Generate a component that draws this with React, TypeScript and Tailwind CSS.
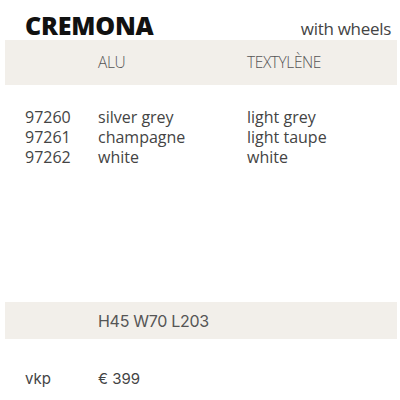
export default function App() {
  const rows = [
    ["97260", "silver grey", "light grey"],
    ["97261", "champagne", "light taupe"],
    ["97262", "white", "white"],
  ];
  return (
    <div className="w-[400px] h-[400px] bg-white overflow-hidden text-[#444]" style={{ fontFamily: '"Open Sans", sans-serif' }}>
      <div className="h-[40px] flex items-baseline justify-between pl-[25px] pr-[9px] pt-[13px]">
        <div className="text-[25px] leading-[25px] font-extrabold text-[#111] tracking-[-0.2px]">CREMONA</div>
        <div className="text-[17px] leading-[20px] text-[#444] tracking-[-0.3px]">with wheels</div>
      </div>
      <div className="ml-[5px] mr-[3px] h-[45px] bg-[#f2efea] grid grid-cols-[93px_149px_1fr] items-center text-[15.5px] font-light text-[#555]">
        <div></div>
        <div className="tracking-[-0.4px]">ALU</div>
        <div className="tracking-[-0.4px]">TEXTYLÈNE</div>
      </div>
      <div className="h-[217px] pt-[22px] pl-[25px]">
        {rows.map((r) => (
          <div key={r[0]} className="grid grid-cols-[73px_149px_1fr] text-[16px] leading-[20px]">
            <div>{r[0]}</div>
            <div>{r[1]}</div>
            <div>{r[2]}</div>
          </div>
        ))}
      </div>
      <div className="ml-[5px] mr-[3px] h-[37px] bg-[#f2efea] flex items-center pl-[93px] text-[16px] text-[#555] tracking-[-0.3px]" style={{ fontFamily: 'Inter, sans-serif' }}>
        H45 W70 L203
      </div>
      <div className="grid grid-cols-[73px_1fr] pl-[25px] pt-[30px] text-[15px] leading-[20px] text-[#444]" style={{ fontFamily: 'Inter, sans-serif' }}>
        <div>vkp</div>
        <div>€ 399</div>
      </div>
    </div>
  );
}
